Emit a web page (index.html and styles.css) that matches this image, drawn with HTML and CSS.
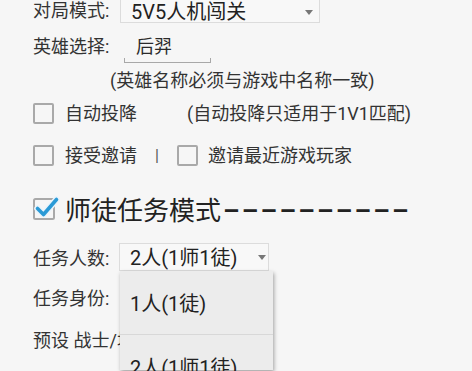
FILE: index.html
```html
<!DOCTYPE html>
<html lang="zh-CN">
<head>
<meta charset="utf-8">
<title>师徒任务模式</title>
<link rel="stylesheet" href="styles.css">
</head>
<body>
<div class="page">
  <div class="row r1">
    <span class="label">对局模式:</span>
    <div class="select s1"><span class="val">5V5人机闯关</span><span class="arrow"></span></div>
  </div>
  <div class="row r2">
    <span class="label">英雄选择:</span>
    <div class="edit e1">后羿</div>
  </div>
  <div class="row r3">(英雄名称必须与游戏中名称一致)</div>
  <div class="row r4">
    <span class="cb"></span><span class="txt">自动投降</span><span class="txt note">(自动投降只适用于1V1匹配)</span>
  </div>
  <div class="row r5">
    <span class="cb"></span><span class="txt">接受邀请</span><span class="sep">|</span><span class="cb cb2"></span><span class="txt txt2">邀请最近游戏玩家</span>
  </div>
  <div class="row r6">
    <svg class="cbx" width="26" height="22" viewBox="0 0 26 22">
      <rect x="1" y="1" width="20" height="20" rx="1.5" fill="none" stroke="#a9a9a9" stroke-width="2"/>
      <path d="M4.5 10.5 L10.5 16.5 L23.5 1.5" fill="none" stroke="#eaf4fb" stroke-width="6.5" stroke-linecap="round" stroke-linejoin="round"/>
      <path d="M4.5 10.5 L10.5 16.5 L23.5 1.5" fill="none" stroke="#2a9ad6" stroke-width="3.6" stroke-linecap="round" stroke-linejoin="round"/>
    </svg>
    <span class="title">师徒任务模式<span class="dashes">––––––––––</span></span>
  </div>
  <div class="row r7">
    <span class="label">任务人数:</span>
    <div class="select s2"><span class="val">2人(1师1徒)</span><span class="arrow"></span>
      <div class="menu">
        <div class="item first">1人(1徒)</div>
        <div class="item">2人(1师1徒)</div>
      </div>
    </div>
  </div>
  <div class="row r8"><span class="label">任务身份:</span></div>
  <div class="row r9"><span class="label">预设 战士/坦克:</span><div class="edit e2"></div></div>
</div>
</body>
</html>
```

FILE: styles.css
```css
html, body {
  margin: 0;
  padding: 0;
  height: 100%;
  background: #f6f6f6;
}
body {
  font-family: Roboto, "Noto Sans CJK SC", sans-serif;
  color: #333;
  overflow: hidden;
}
.page {
  display: flow-root;
  box-sizing: border-box;
  height: 100%;
  padding-left: 33px;
}
.row {
  display: flex;
  align-items: center;
  font-size: 18px;
  line-height: 22px;
  white-space: nowrap;
}
.label {
  width: 87px;
  flex: none;
}
.r1 { margin-top: -1px; height: 24px; }
.r2 { margin-top: 7px; height: 33px; }
.r3 { margin-top: 8px; height: 20px; padding-left: 77px; }
.r4 { margin-top: 12px; height: 21px; }
.r5 { margin-top: 21px; height: 21px; }
.r6 { margin-top: 32px; height: 22px; }
.r7 { margin-top: 23px; height: 28px; }
.r8 { margin-top: 16px; height: 20px; }
.r9 { margin-top: 20px; height: 27px; }

.select {
  box-sizing: border-box;
  display: flex;
  align-items: center;
  justify-content: space-between;
  border: 1px solid #dcdcdc;
  background: #f8f8f8;
  height: 100%;
  padding-top: 2px;
  color: #222;
  font-size: 20px;
}
.s1 { width: 200px; padding-left: 10px; padding-right: 6px; }
.s2 { width: 150px; padding-left: 10px; padding-right: 2px; position: relative; margin-left: -1px; }
.arrow {
  width: 0;
  height: 0;
  border-left: 4.5px solid transparent;
  border-right: 4.5px solid transparent;
  border-top: 5px solid #777;
}
.s2 .arrow { margin-top: -1px; }

.edit {
  box-sizing: border-box;
  position: relative;
  height: 100%;
  border-bottom: 1px solid #a8a8a8;
  display: flex;
  align-items: center;
  padding-top: 2px;
  color: #2a2a2a;
}
.edit::before, .edit::after {
  content: "";
  position: absolute;
  bottom: -1px;
  width: 1px;
  height: 5px;
  background: #a8a8a8;
}
.edit::before { left: 0; }
.edit::after { right: 0; }
.e1 { margin-left: 4px; width: 87px; padding-left: 12px; }
.e2 { margin-left: 4px; width: 106px; }
.r9 .label { width: auto; }

.cb {
  box-sizing: border-box;
  width: 21px;
  height: 21px;
  flex: none;
  border: 2px solid #a9a9a9;
  border-radius: 2px;
}
.txt { margin-left: 11px; }
.note { margin-left: 50px; }
.sep {
  display: inline-block;
  width: 4px;
  margin-left: 18px;
  text-align: center;
  font-size: 16px;
  color: #555;
}
.cb2 { margin-left: 18px; }
.txt2 { margin-left: 10px; }

.cbx { flex: none; overflow: visible; }
.title {
  margin-left: 6px;
  font-size: 26px;
  line-height: 30px;
  padding-top: 4px;
  color: #222;
}
.dashes {
  font-weight: 700;
  letter-spacing: 2.4px;
  margin-left: 2px;
}

.r8 .label, .r7 .label { padding-top: 4px; }

.menu {
  position: absolute;
  top: 27px;
  left: 0;
  width: 153px;
  height: 99px;
  background: #ececec;
  box-shadow: 1px 2px 4px rgba(0, 0, 0, 0.35);
  z-index: 5;
}
.item {
  box-sizing: border-box;
  height: 64px;
  display: flex;
  align-items: center;
  padding-left: 10px;
  padding-top: 2px;
  font-size: 20px;
  color: #222;
}
.item.first { border-bottom: 1px solid #d8d8d8; }
```
